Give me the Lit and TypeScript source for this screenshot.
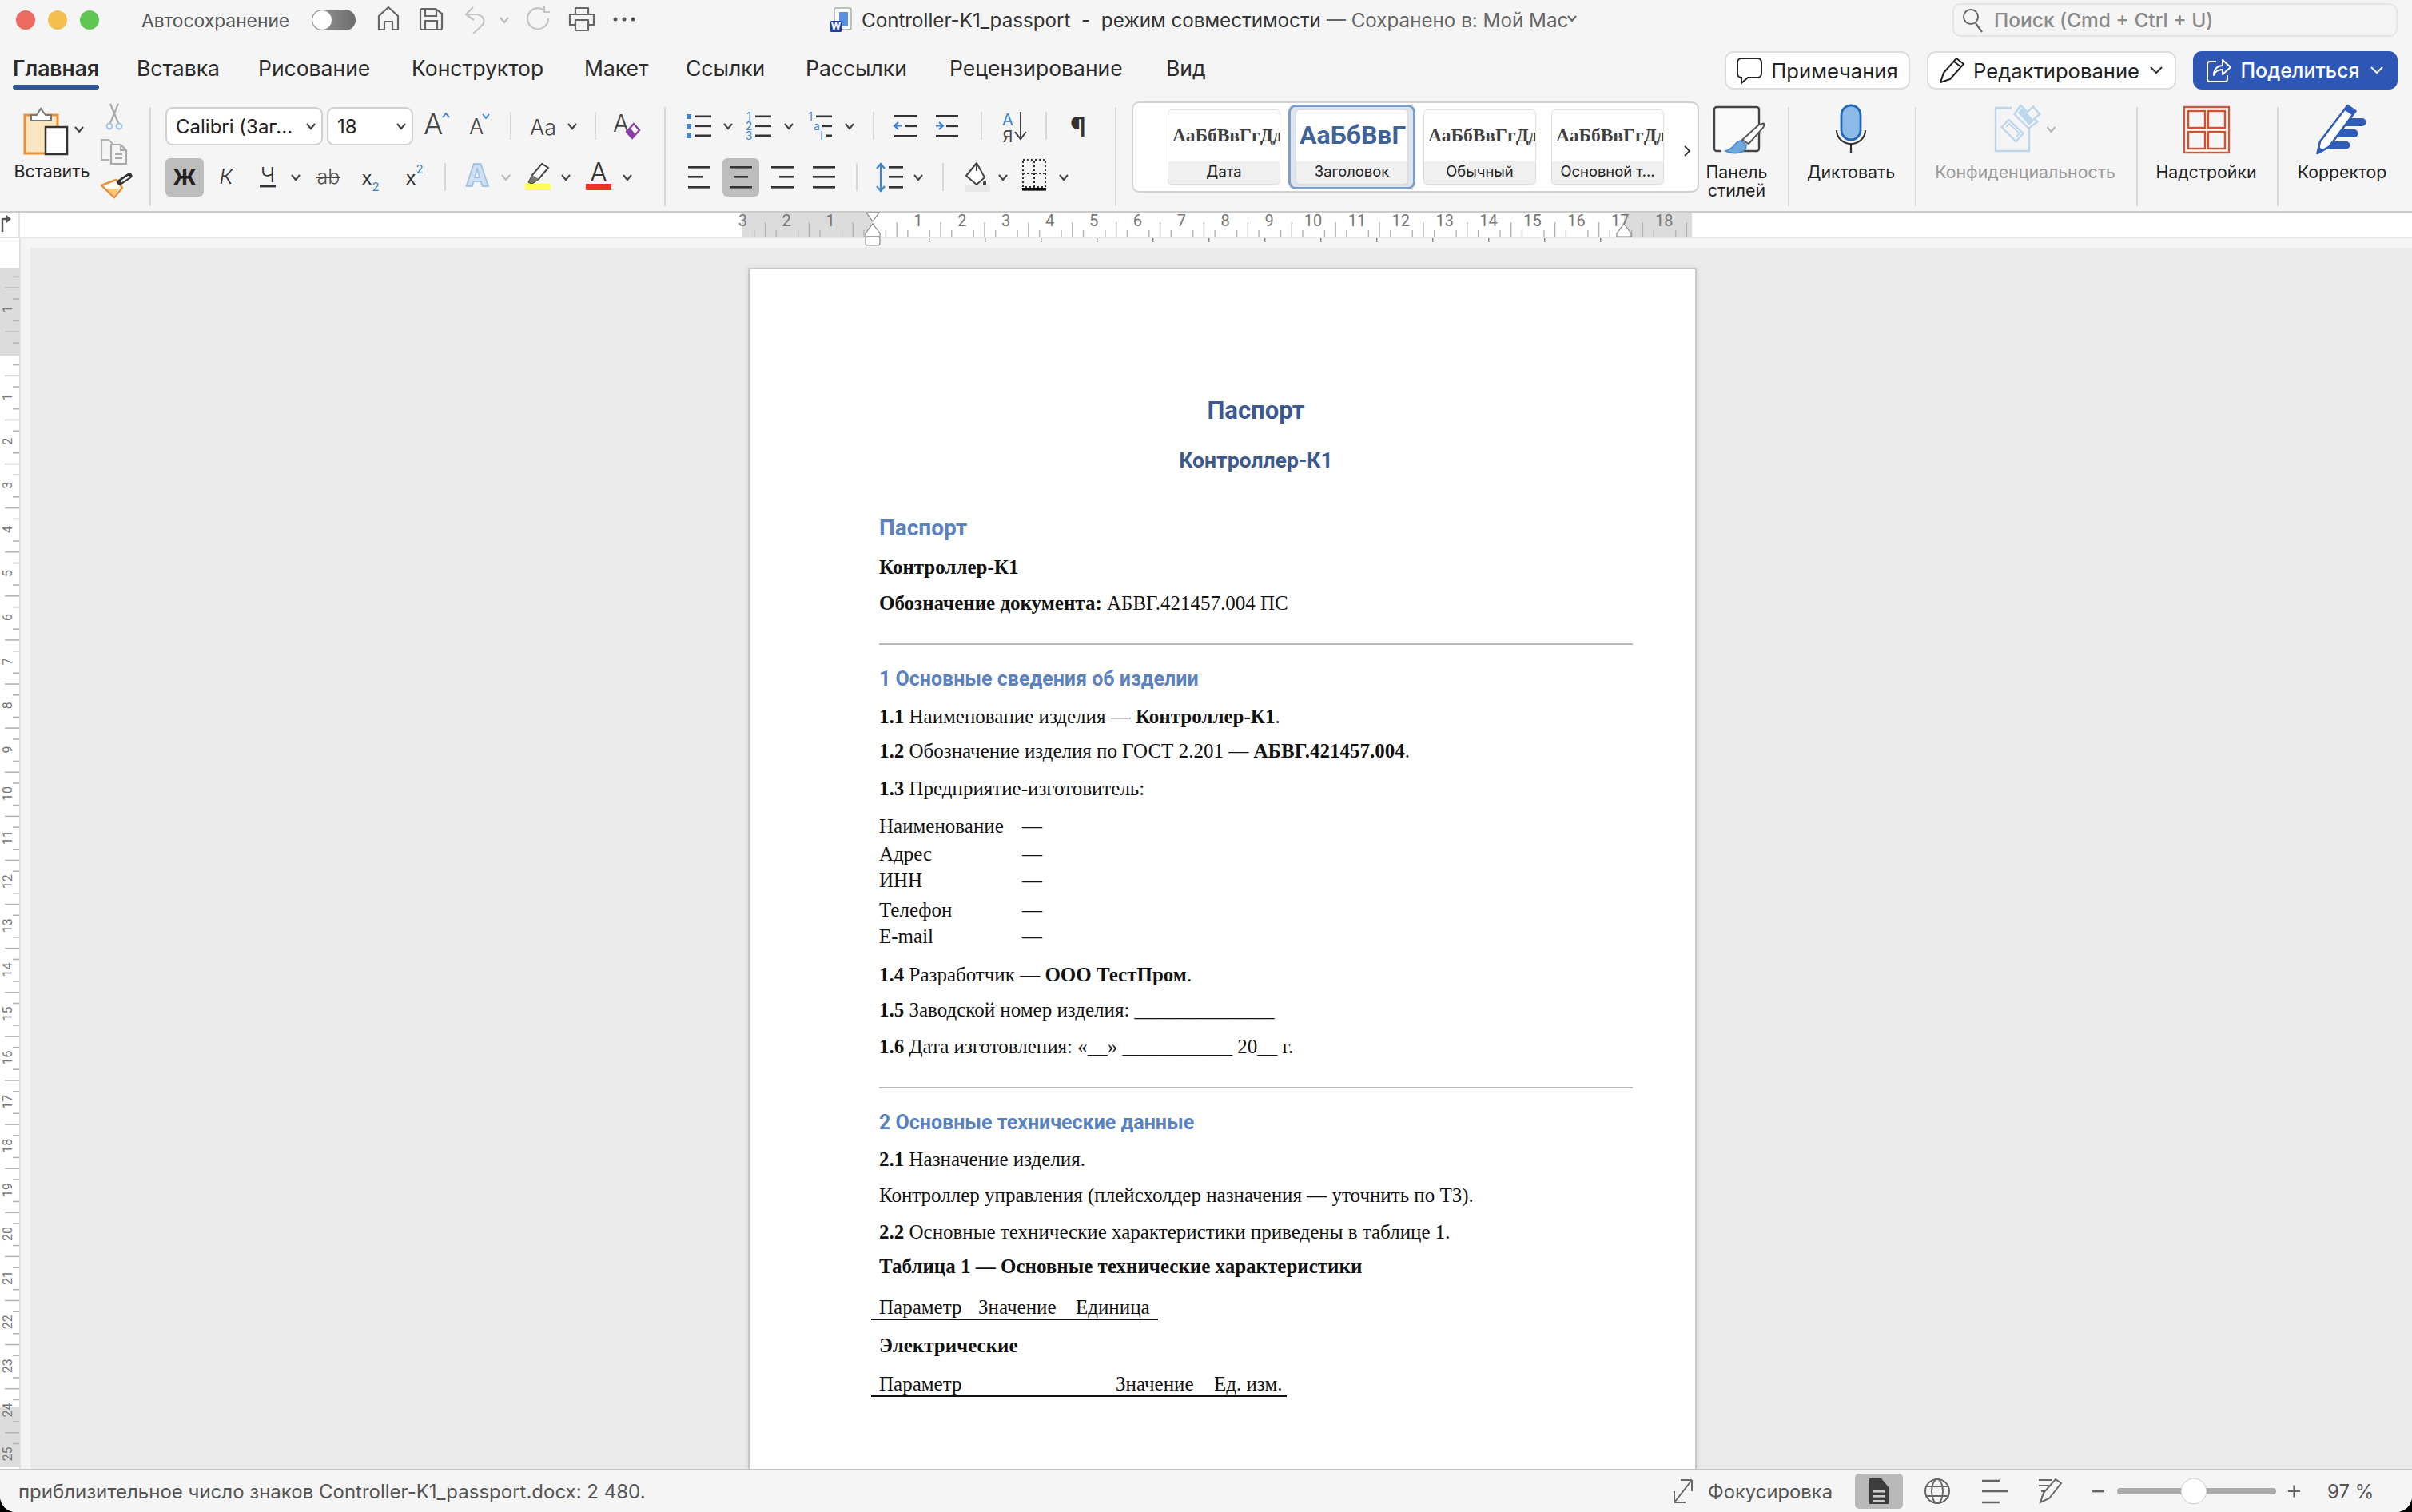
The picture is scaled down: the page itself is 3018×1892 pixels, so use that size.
import { LitElement, html, svg, css } from 'lit';
import { customElement } from 'lit/decorators.js';

const ico = (w: number, h: number, body: unknown) =>
  html`<svg class="ico" width=${w} height=${h} viewBox="0 0 ${w} ${h}">${body}</svg>`;

const chev = (x: number, y: number, c = '#444') =>
  svg`<path d="M${x - 5} ${y - 3}l5 6 5-6" fill="none" stroke=${c} stroke-width="2.2"/>`;

const vsep = (x: number) => svg`<rect x=${x} y="6" width="2" height="35" fill="#d8d8d8"/>`;

const bars = (x: number, w: number, ys: number[], c = '#333') =>
  ys.map((y) => svg`<rect x=${x} y=${y} width=${w} height="2.6" fill=${c}/>`);

const BLUE = '#3f86cf';

@customElement('app-root')
export class AppRoot extends LitElement {
  static styles = css`
    :host {
      display: block;
      width: 3018px;
      height: 1892px;
      background: #000;
      font-family: 'Inter', 'Noto Sans', sans-serif;
      color: #222;
    }
    .win {
      width: 3018px;
      height: 1892px;
      background: #f5f5f5;
      border-radius: 0 0 20px 20px;
      overflow: hidden;
      display: flex;
      flex-direction: column;
    }
    .ico {
      display: block;
      flex: none;
      overflow: visible;
    }

    /* title bar */
    .title {
      height: 50px;
      display: flex;
      align-items: center;
      padding-left: 20px;
      flex: none;
    }
    .dot {
      width: 24px;
      height: 24px;
      border-radius: 50%;
      margin-right: 16px;
    }
    .dot.red {
      background: #ed6a5e;
    }
    .dot.amber {
      background: #f5bf4f;
    }
    .dot.green {
      background: #61c554;
    }
    .auto {
      margin-left: 37px;
      width: 213px;
      font-size: 22.8px;
      color: #555;
      white-space: nowrap;
    }
    .toggle {
      width: 55px;
      height: 26px;
      border-radius: 13px;
      background: linear-gradient(90deg, #999, #6d6d6d);
      flex: none;
      display: flex;
    }
    .toggle i {
      width: 26px;
      height: 26px;
      border-radius: 50%;
      background: #fff;
      border: 1px solid #888;
      box-sizing: border-box;
    }
    .doc-name {
      margin-left: 12px;
      font-size: 24.2px;
      color: #333;
      white-space: pre;
    }
    .doc-name span {
      color: #666;
    }
    .search {
      margin-left: auto;
      margin-right: 18px;
      width: 557px;
      height: 42px;
      box-sizing: border-box;
      border: 2px solid #e6e6e6;
      border-radius: 10px;
      display: flex;
      align-items: center;
      padding-left: 11px;
      gap: 15px;
      font-size: 24.5px;
      font-weight: 500;
      color: #8a8a8a;
      white-space: nowrap;
    }

    /* tabs */
    .tabrow {
      height: 70px;
      display: flex;
      flex: none;
      padding-left: 16px;
    }
    .tabs {
      display: grid;
      grid-template-columns: 155px 152px 192px 216px 127px 150px 180px 271px auto;
      padding-top: 18px;
      align-items: start;
      font-size: 26.5px;
      line-height: 34px;
      color: #2b2b2b;
    }
    .tab.on {
      font-weight: 600;
      justify-self: start;
    }
    .tab.on::after {
      content: '';
      display: block;
      height: 6px;
      margin-top: 4px;
      border-radius: 3px;
      background: #2f5597;
    }
    .actions {
      margin-left: auto;
      margin-right: 18px;
      padding-top: 14px;
      display: flex;
      gap: 21px;
    }
    .act {
      height: 48px;
      box-sizing: border-box;
      border: 2px solid #dedede;
      border-radius: 11px;
      background: #fff;
      display: flex;
      align-items: center;
      justify-content: center;
      gap: 11px;
      font-size: 25.6px;
      color: #222;
    }
    .act.notes {
      width: 232px;
    }
    .act.edit {
      width: 312px;
    }
    .act.share {
      width: 256px;
      background: #2d56b5;
      border-color: #2d56b5;
      color: #fff;
      font-size: 25px;
      font-weight: 500;
    }

    /* ribbon */
    .ribbon {
      height: 144px;
      flex: none;
      display: flex;
      border-bottom: 2px solid #cbcbcb;
    }
    .g {
      height: 124px;
      margin-top: 14px;
      box-sizing: border-box;
      border-left: 2px solid #d8d8d8;
      flex: none;
    }
    .g.first {
      width: 187px;
      border-left: none;
      display: flex;
      margin-top: 10px;
      height: 128px;
    }
    .pastecol {
      width: 128px;
    }
    .lbl {
      font-size: 21.3px;
      line-height: 23px;
      color: #222;
      text-align: center;
    }
    .pastecol .lbl {
      width: 130px;
      margin-top: 3px;
    }
    .g.font {
      width: 644px;
      padding-left: 18px;
    }
    .g.para {
      width: 564px;
    }
    .r {
      display: flex;
      height: 48px;
    }
    .r + .r {
      margin-top: 16px;
    }
    .box {
      height: 48px;
      box-sizing: border-box;
      border: 2px solid #d0d0d0;
      border-radius: 9px;
      background: #fff;
      display: flex;
      align-items: center;
      justify-content: space-between;
      padding: 0 6px 0 11px;
      font-size: 24px;
      color: #222;
      white-space: nowrap;
    }
    .box.name {
      width: 197px;
      margin-right: 5px;
    }
    .box.size {
      width: 108px;
    }
    .bold {
      width: 48px;
      height: 48px;
      border-radius: 6px;
      background: #bdbdbd;
      display: flex;
      align-items: center;
      justify-content: center;
      font-size: 28px;
      font-weight: 700;
      color: #222;
    }
    .g.styles {
      width: 842px;
      display: flex;
      align-items: flex-start;
      padding-left: 19px;
    }
    .gallery {
      width: 710px;
      height: 114px;
      margin-top: -7px;
      box-sizing: border-box;
      border: 2px solid #d2d2d2;
      border-radius: 9px;
      background: #fff;
      display: flex;
      padding: 9px 0 0 44px;
      isolation: isolate;
      flex: none;
    }
    .st {
      width: 139px;
      height: 92px;
      margin-right: 21px;
      border-radius: 5px;
      box-shadow: 0 0 0 1px #dedede, 0 1px 2px #bbb;
      display: flex;
      flex-direction: column;
      position: relative;
      background: #fff;
      flex: none;
    }
    .st.sel::before {
      content: '';
      position: absolute;
      inset: -7px -10px;
      border: 3px solid #7f9fc8;
      border-radius: 9px;
      background: #dde5f1;
      z-index: -1;
    }
    .st .pv {
      height: 64px;
      overflow: hidden;
      white-space: nowrap;
      padding-left: 5px;
      font-family: 'Liberation Serif', serif;
      font-weight: 700;
      font-size: 23.5px;
      line-height: 62px;
      color: #3f3f3f;
      background: #fff;
      border-radius: 5px 5px 0 0;
    }
    .st.sel .pv {
      font-family: 'Roboto', sans-serif;
      font-size: 32px;
      color: #3f6298;
      padding-left: 4px;
    }
    .st .nm {
      height: 28px;
      background: #f0f0f0;
      font-size: 18.4px;
      line-height: 24px;
      text-align: center;
      color: #222;
      border-radius: 0 0 5px 5px;
      white-space: nowrap;
    }
    .more {
      align-self: center;
      margin-left: 3px;
    }
    .panel {
      width: 94px;
      flex: none;
      display: flex;
      flex-direction: column;
      align-items: center;
    }
    .big {
      display: flex;
      flex-direction: column;
      align-items: center;
    }
    .big .lbl,
    .panel .lbl {
      margin-top: 10px;
      white-space: nowrap;
    }
    .big.dict {
      width: 159px;
      padding-right: 3px;
    }
    .big.conf {
      width: 277px;
      padding-right: 3px;
    }
    .big.conf .lbl {
      color: #999;
    }
    .big.addin {
      width: 176px;
      padding-right: 3px;
    }
    .big.editor {
      width: 169px;
      padding-right: 8px;
    }

    /* rulers and document */
    .hr-row {
      height: 30px;
      flex: none;
      display: flex;
      background: #fff;
      border-bottom: 2px solid #e4e4e4;
    }
    .corner {
      width: 25px;
      box-sizing: border-box;
      border-right: 2px solid #e4e4e4;
      margin-right: 903px;
    }
    .hruler {
      position: relative;
      z-index: 2;
    }
    .main {
      flex: 1;
      min-height: 0;
      display: flex;
    }
    .vr {
      width: 26px;
      box-sizing: border-box;
      flex: none;
      background: #fff;
      border-right: 2px solid #e0e0e0;
      overflow: hidden;
    }
    .stage {
      flex: 1;
      margin: 12px 0 0 12px;
      background: #ebebeb;
      overflow: hidden;
      padding-left: 898px;
      padding-top: 25px;
    }
    .page {
      width: 1187px;
      height: 1700px;
      box-sizing: border-box;
      background: #fff;
      border: 2px solid #c8c8c8;
      box-shadow: 0 0 8px rgba(0, 0, 0, 0.08);
      padding: 163px 78px 0 162px;
      font-family: 'Liberation Serif', serif;
      font-size: 25px;
      line-height: 28px;
      color: #111;
    }
    .page p {
      margin: 0;
      white-space: pre;
    }
    .h0 {
      font-family: 'Roboto', sans-serif;
      font-weight: 700;
      text-align: center;
      color: #3c5a8f;
    }
    .h0.a {
      font-size: 31px;
    }
    .h0.b {
      font-size: 26.6px;
    }
    .h1 {
      font-family: 'Roboto', sans-serif;
      font-weight: 700;
      color: #5b82bf;
      font-size: 25px;
    }
    .h1.top {
      font-size: 28px;
    }
    .page hr {
      margin: 36px 0 0;
      height: 2px;
      border: none;
      background: #b8b8b8;
    }
    .page hr + p {
      margin-top: 29px;
    }
    .kv {
      display: flex;
    }
    .kv span {
      width: 179px;
    }
    .tbl {
      display: flex;
      margin-left: -10px;
      padding-left: 10px;
      border-bottom: 2px solid #111;
    }
    .tbl.one {
      width: 349px;
    }
    .tbl.two {
      width: 510px;
    }
    .one span:nth-child(1) {
      width: 124px;
    }
    .one span:nth-child(2) {
      width: 122px;
    }
    .two span:nth-child(1) {
      width: 296px;
    }
    .two span:nth-child(2) {
      width: 123px;
    }
    .g5 { margin-top: 5px !important; }
    .g7 { margin-top: 7px !important; }
    .g9 { margin-top: 9px !important; }
    .g15 { margin-top: 15px !important; }
    .g16 { margin-top: 16px !important; }
    .g17 { margin-top: 17px !important; }
    .g18 { margin-top: 18px !important; }
    .g19 { margin-top: 19px !important; }
    .g20 { margin-top: 20px !important; }
    .g21 { margin-top: 21px !important; }
    .g23 { margin-top: 23px !important; }
    .g34 { margin-top: 34px !important; }
    .g57 { margin-top: 57px !important; }

    /* status bar */
    .status {
      height: 54px;
      flex: none;
      box-sizing: border-box;
      border-top: 2px solid #c4c4c4;
      padding: 0 48px 0 23px;
      display: flex;
      align-items: center;
      font-size: 24px;
      color: #555;
      position: relative;
      background: #f5f5f5;
      white-space: nowrap;
    }
    .status .right {
      margin-left: auto;
      display: flex;
      align-items: center;
    }
    .focus {
      margin: 0 29px 0 19px;
      width: 155px;
      font-size: 23.8px;
    }
    .zoom {
      width: 58px;
    }
  `;

  private qat() {
    const c = '#666';
    return ico(594, 40, svg`
      <path d="M29 32V15L41 4L53 15V32H46V22H36V32Z" fill="none" stroke=${c} stroke-width="2.2" stroke-linejoin="round"/>
      <path d="M85 6H100L108 12V30a2 2 0 0 1-2 2H83a2 2 0 0 1-2-2V8a2 2 0 0 1 2-2ZM87 6V15H101V6M87 32V21H102V32" fill="none" stroke=${c} stroke-width="2.2"/>
      <path d="M147 4L138 13L148 20M139 13H150C160 13 163 22 158 27L147 37" fill="none" stroke="#c4c4c4" stroke-width="2.2"/>
      ${chev(186, 20, '#bbb')}
      <path d="M236 8A13 13 0 1 0 241 18M236 3V10H243" fill="none" stroke="#c4c4c4" stroke-width="2.2"/>
      <path d="M275 13V5H291V13M275 26H268V13H298V26H291M275 20H291V33H275Z" fill="none" stroke=${c} stroke-width="2.2" stroke-linejoin="round"/>
      <circle cx="325" cy="19" r="2.5" fill="#555"/>
      <circle cx="336" cy="19" r="2.5" fill="#555"/>
      <circle cx="347" cy="19" r="2.5" fill="#555"/>
    `);
  }

  private wordIcon() {
    return ico(27, 30, svg`
      <rect x="5" y="0" width="21" height="27" rx="2" fill="#fff" stroke="#aaa" stroke-width="1.5"/>
      <rect x="11" y="5" width="11" height="18" fill="#5a8fe6"/>
      <rect x="0" y="16" width="14" height="14" rx="1.5" fill="#1a3aa5"/>
      <text x="7" y="27" text-anchor="middle" font-size="12" font-weight="700" fill="#fff">W</text>
    `);
  }

  private pasteIcon() {
    return ico(128, 70, svg`
      <rect x="31" y="14" width="41" height="48" fill="#fbe6c2" stroke="#e8913a" stroke-width="3"/>
      <path d="M39 21V14H46L51 6L57 14H64V21Z" fill="#fff" stroke="#777" stroke-width="2"/>
      <rect x="57" y="29" width="27" height="34" fill="#fff" stroke="#333" stroke-width="2.5"/>
      ${chev(99, 32)}
    `);
  }

  private clipTools() {
    return ico(40, 120, svg`
      <path d="M10 0L20 24M20 0L10 24" stroke="#aaa" stroke-width="2.2" fill="none"/>
      <circle cx="9" cy="28" r="3.4" fill="none" stroke="#a9c8e8" stroke-width="2.2"/>
      <circle cx="21" cy="28" r="3.4" fill="none" stroke="#a9c8e8" stroke-width="2.2"/>
      <path d="M9 70H-1V45H8L14 51" fill="none" stroke="#b4b4b4" stroke-width="2.2"/>
      <path d="M11 51H23L30 58V75H11ZM23 51V58H30M16 63H25M16 68H25" fill="#f5f5f5" stroke="#aaa" stroke-width="2.2"/>
      <path d="M-1 102L17 95L25 105L15 117Z" fill="#fff" stroke="#e8913a" stroke-width="2.6" stroke-linejoin="round"/>
      <path d="M6 106L21 106L15 116Z" fill="#f7c87e"/>
      <path d="M22 98L34 90" stroke="#333" stroke-width="7" stroke-linecap="round"/>
      <path d="M24 97L33 91" stroke="#f5f5f5" stroke-width="2.4" stroke-linecap="round"/>
    `);
  }

  private fontRowTop() {
    return ico(314, 48, svg`
      <text x="13" y="34" font-size="36" fill="#444" font-weight="300">A</text>
      <path d="M37 13l4-5 4 5" fill="none" stroke=${BLUE} stroke-width="2"/>
      <text x="70" y="34" font-size="27" fill="#444" font-weight="300">A</text>
      <path d="M87 9l4 5 4-5" fill="none" stroke=${BLUE} stroke-width="2"/>
      ${vsep(121)}
      <text x="146" y="35" font-size="27" fill="#444" font-weight="300">Aa</text>
      ${chev(199, 24)}
      ${vsep(227)}
      <text x="250" y="31" font-size="30" fill="#444" font-weight="300">A</text>
      <path d="M267 31L276 21L283 29L274 39Z" fill="#fff" stroke="#8a3fa8" stroke-width="2.4"/>
      <path d="M267 31L271.5 26L278 34L274 39Z" fill="#8a3fa8"/>
    `);
  }

  private fontRowBottom() {
    return ico(576, 48, svg`
      <text x="28" y="32" text-anchor="middle" font-size="26" font-style="italic" fill="#333" font-weight="300">К</text>
      <text x="80" y="30" text-anchor="middle" font-size="26" fill="#333" font-weight="300">Ч</text>
      <rect x="70" y="34" width="20" height="2.4" fill="#333"/>
      ${chev(115, 24)}
      <text x="156" y="32" text-anchor="middle" font-size="25" fill="#555" font-weight="300">ab</text>
      <rect x="141" y="23" width="30" height="2" fill="#444"/>
      <text x="204" y="33" text-anchor="middle" font-size="24" fill="#333">x</text>
      <text x="215" y="41" text-anchor="middle" font-size="15" fill=${BLUE}>2</text>
      <text x="259" y="33" text-anchor="middle" font-size="24" fill="#333">x</text>
      <text x="270" y="19" text-anchor="middle" font-size="15" fill=${BLUE}>2</text>
      ${vsep(301)}
      <text x="342" y="35" text-anchor="middle" font-size="38" font-weight="800" fill="#cfe0f3" stroke="#9dbfe3" stroke-width="1.5">A</text>
      ${chev(378, 24, '#bbb')}
      <path d="M407 30L411 21L423 7L431 12L419 26L410 32Z" fill="#fff" stroke="#444" stroke-width="2"/>
      <path d="M407 30L411 21L419 26L410 32Z" fill="#777"/>
      <rect x="402" y="32" width="32" height="8" fill="#ffff4d"/>
      ${chev(453, 24)}
      <text x="494" y="29" text-anchor="middle" font-size="32" fill="#333" font-weight="300">A</text>
      <rect x="478" y="32" width="32" height="8" fill="#ee3124"/>
      ${chev(530, 24)}
    `);
  }

  private paraRowTop() {
    return ico(562, 48, svg`
      <rect x="26" y="9" width="6" height="6" fill=${BLUE}/>
      <rect x="26" y="21" width="6" height="6" fill=${BLUE}/>
      <rect x="26" y="33" width="6" height="6" fill=${BLUE}/>
      ${bars(36, 21, [10.5, 22.5, 34.5])}
      ${chev(78, 24)}
      <text x="104" y="17" text-anchor="middle" font-size="14" fill=${BLUE}>1</text>
      <text x="104" y="29" text-anchor="middle" font-size="14" fill=${BLUE}>2</text>
      <text x="104" y="41" text-anchor="middle" font-size="14" fill=${BLUE}>3</text>
      ${bars(112, 20, [10.5, 22.5, 34.5])}
      ${chev(154, 24)}
      <text x="181" y="17" text-anchor="middle" font-size="14" fill=${BLUE}>1</text>
      <text x="189" y="29" text-anchor="middle" font-size="14" fill=${BLUE}>a</text>
      <text x="195" y="41" text-anchor="middle" font-size="14" fill=${BLUE}>i</text>
      ${bars(188, 20, [10.5])}${bars(196, 12, [22.5])}${bars(201, 7, [34.5])}
      ${chev(230, 24)}
      ${vsep(259)}
      ${bars(286, 28, [10])}${bars(299, 15, [22.5])}${bars(286, 28, [35])}
      <path d="M295 23.5H286M291 19l-5 4.5 5 4.5" fill="none" stroke=${BLUE} stroke-width="2.2"/>
      ${bars(338, 28, [10])}${bars(351, 15, [22.5])}${bars(338, 28, [35])}
      <path d="M338 23.5H347M342 19l5 4.5-5 4.5" fill="none" stroke=${BLUE} stroke-width="2.2"/>
      ${vsep(394)}
      <text x="428" y="23" text-anchor="middle" font-size="20" fill=${BLUE}>A</text>
      <text x="428" y="44" text-anchor="middle" font-size="20" fill="#444">Я</text>
      <path d="M444 6V39M437 31l7 9 7-9" fill="none" stroke="#444" stroke-width="2"/>
      ${vsep(475)}
      <text x="516" y="37" text-anchor="middle" font-size="34" font-weight="500" fill="#333">¶</text>
    `);
  }

  private paraRowBottom() {
    const ys = [10, 22, 35];
    return ico(562, 48, svg`
      ${bars(28, 27, [10, 35])}${bars(28, 18, [22])}
      <rect x="71" y="0" width="46" height="48" rx="6" fill="#bdbdbd"/>
      ${bars(80, 28, [10, 35])}${bars(85, 18, [22])}
      ${bars(132, 28, [10, 35])}${bars(142, 18, [22])}
      ${bars(184, 28, ys)}
      ${vsep(238)}
      <path d="M269 8V40M264 13l5-6 5 6M264 35l5 6 5-6" fill="none" stroke=${BLUE} stroke-width="2.2"/>
      ${bars(279, 18, [10, 22, 35])}
      ${chev(316, 24)}
      ${vsep(346)}
      <path d="M376 22L389 6L399 24L389 33Z" fill="#fff" stroke="#444" stroke-width="2" stroke-linejoin="round"/>
      <path d="M389 6V16" stroke="#444" stroke-width="2"/>
      <path d="M397 30Q401 24 401 32Q401 36 397 34Z" fill="#444"/>
      <rect x="375" y="34" width="31" height="8" fill="#e8e8e8"/>
      ${chev(422, 24)}
      <rect x="447" y="2" width="28" height="34" fill="none" stroke="#333" stroke-width="2" stroke-dasharray="2 3"/>
      <path d="M461 4V36M447 19H475" stroke="#333" stroke-width="2" stroke-dasharray="2 3"/>
      <rect x="446" y="37" width="30" height="3.6" fill="#111"/>
      ${chev(498, 24)}
    `);
  }

  private panelIcon() {
    return ico(94, 60, svg`
      <rect x="19" y="0" width="56" height="55" rx="3" fill="#fafafa" stroke="#444" stroke-width="2.4"/>
      <path d="M79 21C82 19 82 23 80 26L62 46L54 41L75 22Z" fill="#fff" stroke="#555" stroke-width="2"/>
      <path d="M28 52H42V58H28Z" fill="#f5f5f5"/>
      <path d="M52 42C44 43 46 51 33 55C44 60 60 58 59 47Z" fill="#6fa8dc" stroke="#4a86c5" stroke-width="1.5"/>
    `);
  }

  private micIcon() {
    return ico(60, 60, svg`
      <rect x="18" y="-2" width="24" height="43" rx="12" fill="#8cbbe8" stroke="#2468b8" stroke-width="2.8"/>
      <path d="M12 29A18 17 0 0 0 48 29" fill="none" stroke="#333" stroke-width="2.2"/>
      <path d="M30 46V57" stroke="#333" stroke-width="2.2"/>
    `);
  }

  private confIcon() {
    const c = '#bcd6ee';
    return ico(90, 60, svg`
      <path d="M28 1H8V55H50V27" fill="none" stroke=${c} stroke-width="2.4"/>
      <path d="M15.5 25L24.5 16L42.5 33L33.5 43Z" fill="#f5f5f5" stroke=${c} stroke-width="2.4"/>
      <path d="M21 25L25 21L38 33L34 37" fill="none" stroke=${c} stroke-width="1.8"/>
      <path d="M31.5 9L39.5 -2L48 6L55 -0.5L63 9L56 15L60.5 18L49.5 27Z" fill="#f5f5f5" stroke=${c} stroke-width="2.4"/>
      <path d="M36 7L41 1L56 17L50 23Z" fill=${c}/>
      ${chev(77.5, 28, '#b5b5b5')}
    `);
  }

  private addinsIcon() {
    const c = '#d6512b';
    return ico(58, 60, svg`
      <rect x="1" y="0" width="56" height="57" fill="#fff" stroke="#c9593c" stroke-width="2.4"/>
      <rect x="6" y="5" width="21" height="21" fill="#f5f5f5" stroke=${c} stroke-width="2.4"/>
      <rect x="31" y="5" width="21" height="21" fill="#f5f5f5" stroke=${c} stroke-width="2.4"/>
      <rect x="6" y="31" width="21" height="21" fill="#f5f5f5" stroke=${c} stroke-width="2.4"/>
      <rect x="31" y="31" width="21" height="21" fill="#f5f5f5" stroke=${c} stroke-width="2.4"/>
    `);
  }

  private editorIcon() {
    const c = '#2f5cb8';
    return ico(64, 60, svg`
      <rect x="30" y="14" width="31.5" height="10" rx="5" fill=${c}/>
      <rect x="20" y="28" width="31.5" height="10" rx="5" fill=${c}/>
      <rect x="12" y="43" width="29.5" height="9.5" rx="4.7" fill=${c}/>
      <path d="M0.5 58L4 43L38.5 -2L48.5 5L15 50Z" fill="#fff" stroke=${c} stroke-width="2.6" stroke-linejoin="round"/>
      <path d="M38.5 -2L48.5 5L45 10L35 3Z" fill=${c} stroke=${c} stroke-width="1.5"/>
      <path d="M0.5 58L3 50L8 54Z" fill=${c}/>
    `);
  }

  private hRuler() {
    const step = 54.9 / 4;
    const marks = [];
    for (let k = -12; k <= 74; k++) {
      const x = 166 + k * step;
      if (x < 0 || x > 1189) continue;
      if (k % 4 === 0) {
        if (k !== 0)
          marks.push(svg`<text x=${x} y="17" text-anchor="middle" font-size="20" font-family="Roboto" fill="#777">${Math.abs(k / 4)}</text>`);
      } else {
        marks.push(svg`<rect x=${x} y=${k % 2 === 0 ? 12 : 22} width="1.4" height=${k % 2 === 0 ? 18 : 8} fill="#b4b4b4"/>`);
      }
    }
    const stops = [];
    for (let x = 234; x < 1104; x += 70) {
      stops.push(svg`<rect x=${x} y="32" width="1.5" height="5" fill="#888"/>`);
    }
    return html`<svg class="ico hruler" width="1189" height="30" viewBox="0 0 1189 30">
      <rect x="0" y="0" width="164" height="30" fill="#dcdcdc"/>
      <rect x="1104" y="0" width="85" height="30" fill="#dcdcdc"/>
      ${marks}${stops}
      <path d="M156 0H172L164 11Z" fill="#fff" stroke="#888" stroke-width="1.2"/>
      <path d="M164 14L173 26V30H155V26Z" fill="#fff" stroke="#888" stroke-width="1.2"/>
      <rect x="155" y="30" width="18" height="11" rx="3" fill="#fff" stroke="#888" stroke-width="1.2"/>
      <path d="M1104 14L1113 26V30H1095V26Z" fill="#fff" stroke="#888" stroke-width="1.2"/>
    </svg>`;
  }

  private vRuler() {
    const step = 13.775;
    const marks = [];
    for (let k = -7; k <= 100; k++) {
      const y = 144 + k * step;
      if (k % 4 === 0) {
        if (k !== 0)
          marks.push(svg`<text x="0" y="0" transform="translate(14.5 ${y}) rotate(-90)" text-anchor="middle" font-size="16" font-family="Roboto" fill="#777">${Math.abs(k / 4)}</text>`);
      } else {
        const tall = k % 2 === 0;
        marks.push(svg`<rect x=${tall ? 6 : 16} y=${y} width=${tall ? 18 : 8} height="1.6" fill="#b4b4b4"/>`);
      }
    }
    return html`<svg class="ico" width="24" height="1538" viewBox="0 0 24 1538">
      <rect x="0" y="37" width="24" height="110" fill="#dcdcdc"/>
      <rect x="0" y="1462" width="24" height="76" fill="#dcdcdc"/>
      ${marks}
    </svg>`;
  }

  private statusIcons() {
    const c = '#666';
    return ico(591, 44, svg`
      <rect x="0" y="0" width="60" height="44" rx="5" fill="#b9b9b9"/>
      <path d="M18 6H33L42 17V38H18Z" fill="#3d3d3d"/>
      <rect x="23" y="21" width="14" height="2.6" fill="#ccc"/>
      <rect x="23" y="27" width="14" height="2.6" fill="#ccc"/>
      <rect x="23" y="33" width="14" height="2.6" fill="#ccc"/>
      <circle cx="103" cy="22" r="15" fill="none" stroke=${c} stroke-width="2"/>
      <ellipse cx="103" cy="22" rx="7" ry="15" fill="none" stroke=${c} stroke-width="2"/>
      <path d="M88 16H118M88 28H118" stroke=${c} stroke-width="2"/>
      <path d="M159 9H181M159 22H191M159 36H181" stroke=${c} stroke-width="2.4"/>
      <path d="M230 8H247M230 15H243M233 22H240M233 29H237" stroke=${c} stroke-width="2"/>
      <path d="M232 36L236 24L251 7L258 12L243 31Z" fill="#f5f5f5" stroke=${c} stroke-width="2"/>
      <rect x="297" y="21" width="15" height="2.4" fill=${c}/>
      <rect x="328" y="18" width="199" height="8" rx="4" fill="#aaa"/>
      <circle cx="424" cy="22" r="16" fill="#fff" stroke="#ccc" stroke-width="1"/>
      <path d="M542 22H557M549.5 14.5V29.5" stroke=${c} stroke-width="2.2"/>
    `);
  }

  render() {
    return html`
      <div class="win">
        <div class="title">
          <div class="dot red"></div>
          <div class="dot amber"></div>
          <div class="dot green"></div>
          <div class="auto">Автосохранение</div>
          <div class="toggle"><i></i></div>
          ${this.qat()}
          ${this.wordIcon()}
          <div class="doc-name">Controller-K1_passport  -  режим совместимости <span>— Сохранено в: Мой Мас</span></div>
          ${ico(26, 16, chev(5, 6, '#666'))}
          <div class="search">
            ${ico(24, 32, svg`
              <circle cx="10" cy="12" r="9" fill="none" stroke="#666" stroke-width="2"/>
              <path d="M16 20L24 31" stroke="#666" stroke-width="2.2"/>
            `)}
            <span>Поиск (Cmd + Ctrl + U)</span>
          </div>
        </div>

        <div class="tabrow">
          <div class="tabs">
            <div class="tab on">Главная</div>
            <div class="tab">Вставка</div>
            <div class="tab">Рисование</div>
            <div class="tab">Конструктор</div>
            <div class="tab">Макет</div>
            <div class="tab">Ссылки</div>
            <div class="tab">Рассылки</div>
            <div class="tab">Рецензирование</div>
            <div class="tab">Вид</div>
          </div>
          <div class="actions">
            <div class="act notes">
              ${ico(32, 32, svg`<path d="M6 1H26A5 5 0 0 1 31 6V20A5 5 0 0 1 26 25H14L6 32V25A5 5 0 0 1 1 20V6A5 5 0 0 1 6 1Z" fill="none" stroke="#222" stroke-width="2"/>`)}
              <span>Примечания</span>
            </div>
            <div class="act edit">
              ${ico(32, 32, svg`<path d="M2 31L6 19L22 1L31 8L14 27Z M19 5L28 12" fill="none" stroke="#222" stroke-width="2" stroke-linejoin="round"/>`)}
              <span>Редактирование</span>
              ${ico(20, 10, svg`<path d="M3 1l7 7 7-7" fill="none" stroke="#333" stroke-width="2"/>`)}
            </div>
            <div class="act share">
              ${ico(32, 32, svg`
                <path d="M13 5H5A3 3 0 0 0 2 8V27A3 3 0 0 0 5 30H24A3 3 0 0 0 27 27V22" fill="none" stroke="#fff" stroke-width="2"/>
                <path d="M10 22C10 14 15 10 21 10V3L31 12L21 21V15C16 15 12 17 10 22Z" fill="none" stroke="#fff" stroke-width="2" stroke-linejoin="round"/>
              `)}
              <span>Поделиться</span>
              ${ico(20, 10, svg`<path d="M3 1l7 7 7-7" fill="none" stroke="#fff" stroke-width="2"/>`)}
            </div>
          </div>
        </div>

        <div class="ribbon">
          <div class="g first">
            <div class="pastecol">
              ${this.pasteIcon()}
              <div class="lbl">Вставить</div>
            </div>
            ${this.clipTools()}
          </div>

          <div class="g font">
            <div class="r">
              <div class="box name">Calibri (Заг... ${ico(14, 10, chev(7, 5))}</div>
              <div class="box size">18 ${ico(14, 10, chev(7, 5))}</div>
              ${this.fontRowTop()}
            </div>
            <div class="r">
              <div class="bold">Ж</div>
              ${this.fontRowBottom()}
            </div>
          </div>

          <div class="g para">
            <div class="r">${this.paraRowTop()}</div>
            <div class="r">${this.paraRowBottom()}</div>
          </div>

          <div class="g styles">
            <div class="gallery">
              <div class="st"><div class="pv">АаБбВвГгДд</div><div class="nm">Дата</div></div>
              <div class="st sel"><div class="pv">АаБбВвГ</div><div class="nm">Заголовок</div></div>
              <div class="st"><div class="pv">АаБбВвГгДд</div><div class="nm">Обычный</div></div>
              <div class="st"><div class="pv">АаБбВвГгДд</div><div class="nm">Основной т...</div></div>
              <div class="more">${ico(12, 16, svg`<path d="M3 2l6 6-6 6" fill="none" stroke="#333" stroke-width="2"/>`)}</div>
            </div>
            <div class="panel">
              ${this.panelIcon()}
              <div class="lbl">Панель<br />стилей</div>
            </div>
          </div>

          <div class="g big dict">${this.micIcon()}<div class="lbl">Диктовать</div></div>
          <div class="g big conf">${this.confIcon()}<div class="lbl">Конфиденциальность</div></div>
          <div class="g big addin">${this.addinsIcon()}<div class="lbl">Надстройки</div></div>
          <div class="g big editor">${this.editorIcon()}<div class="lbl">Корректор</div></div>
        </div>

        <div class="hr-row">
          <div class="corner">
            ${ico(20, 28, svg`
              <path d="M3 24V8H9" fill="none" stroke="#555" stroke-width="2.4"/>
              <path d="M8 3L14 8L8 13Z" fill="#555"/>
            `)}
          </div>
          ${this.hRuler()}
        </div>

        <div class="main">
          <div class="vr">${this.vRuler()}</div>
          <div class="stage">
            <div class="page">
              <p class="h0 a">Паспорт</p>
              <p class="h0 b g34">Контроллер-К1</p>
              <p class="h1 top g57">Паспорт</p>
              <p class="g21"><b>Контроллер-К1</b></p>
              <p class="g17"><b>Обозначение документа:</b> АБВГ.421457.004 ПС</p>
              <hr />
              <p class="h1">1 Основные сведения об изделии</p>
              <p class="g19"><b>1.1</b> Наименование изделия — <b>Контроллер-К1</b>.</p>
              <p class="g15"><b>1.2</b> Обозначение изделия по ГОСТ 2.201 — <b>АБВГ.421457.004</b>.</p>
              <p class="g19"><b>1.3</b> Предприятие-изготовитель:</p>
              <div class="kv g19"><span>Наименование</span>—</div>
              <div class="kv g7"><span>Адрес</span>—</div>
              <div class="kv g5"><span>ИНН</span>—</div>
              <div class="kv g9"><span>Телефон</span>—</div>
              <div class="kv g5"><span>E-mail</span>—</div>
              <p class="g20"><b>1.4</b> Разработчик — <b>ООО ТестПром</b>.</p>
              <p class="g16"><b>1.5</b> Заводской номер изделия: ______________</p>
              <p class="g18"><b>1.6</b> Дата изготовления: «__» ___________ 20__ г.</p>
              <hr />
              <p class="h1">2 Основные технические данные</p>
              <p class="g18"><b>2.1</b> Назначение изделия.</p>
              <p class="g17">Контроллер управления (плейсхолдер назначения — уточнить по ТЗ).</p>
              <p class="g18"><b>2.2</b> Основные технические характеристики приведены в таблице 1.</p>
              <p class="g15"><b>Таблица 1 — Основные технические характеристики</b></p>
              <div class="tbl one g23"><span>Параметр</span><span>Значение</span><span>Единица</span></div>
              <p class="g18"><b>Электрические</b></p>
              <div class="tbl two g20"><span>Параметр</span><span>Значение</span><span>Ед. изм.</span></div>
            </div>
          </div>
        </div>

        <div class="status">
          <span>приблизительное число знаков Controller-K1_passport.docx: 2 480.</span>
          <div class="right">
            ${ico(24, 30, svg`<path d="M1 29V15M1 29H15M1 29L23 1M23 1H9M23 1V15" fill="none" stroke="#666" stroke-width="2"/>`)}
            <div class="focus">Фокусировка</div>
            ${this.statusIcons()}
            <div class="zoom">97 %</div>
          </div>
        </div>
      </div>
    `;
  }
}
